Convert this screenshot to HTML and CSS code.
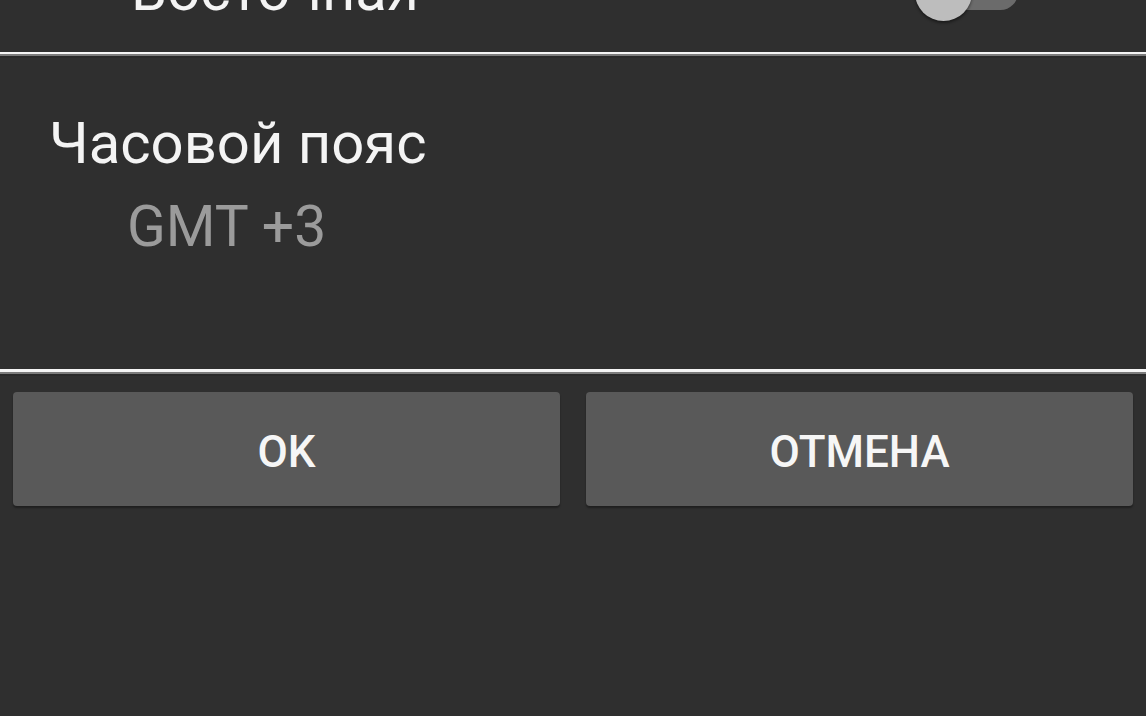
FILE: index.html
```html
<!DOCTYPE html>
<html lang="ru">
<head>
    <meta charset="UTF-8">
    <meta name="viewport" content="width=device-width, initial-scale=1.0">
    <title>Настройки времени</title>
    <link rel="stylesheet" href="styles.css">
</head>
<body>
    <div class="dialog">
        <!-- previous row, scrolled mostly out of view -->
        <div class="row row-top">
            <span class="row-label">Восточная</span>
            <div class="switch">
                <div class="switch-track"></div>
                <div class="switch-thumb"></div>
            </div>
        </div>
        <div class="divider"></div>

        <div class="pref">
            <div class="pref-title">Часовой пояс</div>
            <div class="pref-summary">GMT +3</div>
        </div>
        <div class="divider divider-thick"></div>

        <div class="buttons">
            <button class="btn">OK</button>
            <button class="btn">ОТМЕНА</button>
        </div>
    </div>
</body>
</html>
```

FILE: styles.css
```css
html, body {
    margin: 0;
    padding: 0;
    height: 100%;
    overflow: hidden;
    background-color: #2f2f2f;
    font-family: Roboto, "Noto Sans", sans-serif;
}

.dialog {
    display: flex;
    flex-direction: column;
}

.row {
    display: flex;
    align-items: center;
    justify-content: space-between;
}

.row-top {
    height: 96px;
    margin-top: -56px;
    padding: 0 128px 12px 131px;
}

.row-label {
    font-size: 58px;
    line-height: 67px;
    color: #f4f4f4;
    margin-bottom: 3px;
}

.switch {
    position: relative;
    width: 103px;
    height: 57px;
}

.switch-track {
    position: absolute;
    left: 10px;
    right: 0;
    top: 11px;
    height: 35px;
    border-radius: 18px;
    background-color: #6b6b6b;
}

.switch-thumb {
    position: absolute;
    left: 0;
    top: 0;
    width: 57px;
    height: 57px;
    border-radius: 50%;
    background-color: #bdbdbd;
    box-shadow: 0 2px 3px rgba(0, 0, 0, 0.45);
}

.divider {
    height: 2px;
    background-color: #f5f5f5;
    border-bottom: 2px solid #7c7c7c;
    box-shadow: 0 2px 0 #2a2a2a;
}

.divider-thick {
    height: 3px;
}

.pref {
    height: 259px;
    padding: 54px 0 0 49px;
}

.pref-title {
    font-size: 58px;
    line-height: 67px;
    color: #f4f4f4;
}

.pref-summary {
    font-size: 57px;
    line-height: 67px;
    color: #9b9b9b;
    margin-top: 16px;
    padding-left: 78px;
}

.buttons {
    display: grid;
    grid-template-columns: 1fr 1fr;
    gap: 26px;
    padding: 18px 13px 0 13px;
}

.btn {
    height: 114px;
    border: none;
    border-radius: 4px;
    background-color: #595959;
    box-shadow: 0 2px 2px rgba(0, 0, 0, 0.35);
    color: #f6f6f6;
    font-family: Roboto, "Noto Sans", sans-serif;
    font-size: 44px;
    font-weight: 500;
    padding: 5px 0 0 0;
    cursor: pointer;
}
```
